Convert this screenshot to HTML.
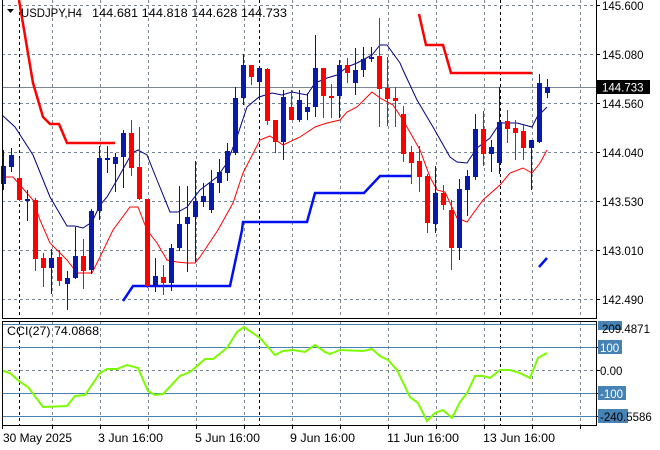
<!DOCTYPE html>
<html><head><meta charset="utf-8"><style>
html,body{margin:0;padding:0;background:#fff;}
svg{display:block;font-family:"Liberation Sans",sans-serif;}
</style></head><body>
<svg width="660" height="450" viewBox="0 0 660 450" xmlns="http://www.w3.org/2000/svg">
<rect width="660" height="450" fill="#fff"/>
<g stroke="#7a8796" stroke-width="1" stroke-dasharray="3,3" fill="none">
<path d="M2 54.5H596M2 103.5H596M2 152.5H596M2 201.5H596M2 250.5H596M2 299.5H596M2 5.5H596"/>
<path d="M52.5 0V318M100.5 0V318M148.5 0V318M196.5 0V318M244.5 0V318M292.5 0V318M340.5 0V318M388.5 0V318M436.5 0V318M484.5 0V318M532.5 0V318M580.5 0V318"/>
<path d="M52.5 322V425M100.5 322V425M148.5 322V425M196.5 322V425M244.5 322V425M292.5 322V425M340.5 322V425M388.5 322V425M436.5 322V425M484.5 322V425M532.5 322V425M580.5 322V425M2 370.5H596"/>
</g>
<g stroke="#000" stroke-width="1" stroke-dasharray="3,3" fill="none">
<path d="M19.5 0V318M259.5 0V318M500.5 0V318M19.5 322V425M259.5 322V425M500.5 322V425"/>
</g>
<path d="M2 87.5H596" stroke="#7d8590" stroke-width="1"/>
<g fill="none" stroke-width="2.5">
<polyline stroke="#f00" points="19,0 33,83 43,117 50,124 59,124 67,143 115,143"/>
<polyline stroke="#f00" points="419,14 426,45 443,45 451,73 532,73"/>
<polyline stroke="#0010f0" points="123,301 133,286 230,286 242,230 243,222 307,222 315,193 364,193 380,176 411,176"/>
<polyline stroke="#0010f0" points="539,267 547,258"/>
</g>
<polyline fill="none" stroke="#000080" stroke-width="1" points="2,115 15,127 33,155 50,197 67,226 75,226 83,228 92,222 100,205 107,197 117,180 132,153 138,150 147,155 157,180 170,212 178,212 187,207 200,190 217,177 227,163 237,137 247,107 259,97 272,93 282,95 292,92 307,95 315,83 327,78 337,75 347,67 357,63 372,55 380,45 387,45 400,63 403,70 417,100 433,127 450,157 457,162 467,163 477,148 490,138 500,123 517,123 532,127 537,117 547,107"/>
<polyline fill="none" stroke="#f00" stroke-width="1" points="2,177 13,177 33,200 40,220 50,243 67,260 77,273 92,273 100,257 113,230 130,207 138,207 147,230 157,243 167,260 177,262 187,263 195,263 200,257 218,230 233,203 243,173 260,140 270,136 283,145 300,137 315,127 327,123 340,120 347,112 357,107 372,92 380,98 393,105 403,120 420,150 430,177 437,190 445,192 457,218 467,222 483,200 500,185 510,173 523,168 532,173 540,163 547,150"/>
<g stroke-width="1">
<g stroke="#0000ff" fill="#0a1aa8">
<path d="M3.5 150V190M11.5 148V172M27.5 190V221M51.5 249V294M67.5 271V310M75.5 227V279M91.5 209V274M99.5 146V220M107.5 146V173M115.5 153V192M123.5 130V188M155.5 258V292M171.5 244V291M179.5 186V251M187.5 186V272M195.5 161V262M203.5 183V207M211.5 170V213M219.5 159V193M227.5 143V181M235.5 87V155M243.5 54V105M259.5 68V100M283.5 90V160M299.5 90V122M307.5 93V120M315.5 35V117M339.5 60V118M355.5 48V95M363.5 47V77M371.5 47V62M435.5 166V233M459.5 179V260M467.5 170V216M475.5 114V180M491.5 140V172M499.5 87V174M531.5 140V190M539.5 74V143M547.5 79V98"/>
</g>
<g fill="#0a1aa8">
<rect x="1" y="166" width="5" height="18"/><rect x="9" y="155" width="5" height="12"/><rect x="25" y="199" width="5" height="2"/><rect x="49" y="258" width="5" height="10"/><rect x="65" y="278" width="5" height="6"/><rect x="73" y="256" width="5" height="22"/><rect x="89" y="211" width="5" height="59"/><rect x="97" y="158" width="5" height="53"/><rect x="105" y="158" width="5" height="2"/><rect x="113" y="157" width="5" height="7"/><rect x="121" y="133" width="5" height="24"/><rect x="153" y="276" width="5" height="9"/><rect x="169" y="248" width="5" height="35"/><rect x="177" y="224" width="5" height="24"/><rect x="185" y="217" width="5" height="7"/><rect x="193" y="201" width="5" height="16"/><rect x="201" y="196" width="5" height="6"/><rect x="209" y="183" width="5" height="27"/><rect x="217" y="172" width="5" height="11"/><rect x="225" y="151" width="5" height="22"/><rect x="233" y="98" width="5" height="55"/><rect x="241" y="65" width="5" height="33"/><rect x="257" y="68" width="5" height="14"/><rect x="281" y="97" width="5" height="45"/><rect x="297" y="100" width="5" height="20"/><rect x="305" y="107" width="5" height="5"/><rect x="313" y="68" width="5" height="39"/><rect x="337" y="65" width="5" height="31"/><rect x="353" y="70" width="5" height="13"/><rect x="361" y="59" width="5" height="11"/><rect x="369" y="57" width="5" height="2"/><rect x="433" y="193" width="5" height="31"/><rect x="457" y="189" width="5" height="59"/><rect x="465" y="176" width="5" height="14"/><rect x="473" y="129" width="5" height="48"/><rect x="489" y="147" width="5" height="7"/><rect x="497" y="122" width="5" height="41"/><rect x="529" y="140" width="5" height="8"/><rect x="537" y="83" width="5" height="59"/><rect x="545" y="87" width="5" height="6"/>
</g>
<g stroke="#f00">
<path d="M19.5 158V201M35.5 198V271M43.5 253V287M59.5 250V286M83.5 239V289M131.5 120V176M139.5 127V200M147.5 199V288M163.5 265V295M251.5 65V85M267.5 68V125M275.5 120V153M291.5 90V120M323.5 68V118M331.5 84V118M347.5 58V83M379.5 18V127M387.5 57V126M395.5 87V127M403.5 106V162M411.5 146V184M419.5 146V192M427.5 174V233M443.5 185V210M451.5 200V270M483.5 111V166M507.5 110V143M515.5 120V160M523.5 125V160"/>
</g>
<g fill="#f00">
<rect x="17" y="178" width="5" height="22"/><rect x="33" y="200" width="5" height="59"/><rect x="41" y="258" width="5" height="10"/><rect x="57" y="257" width="5" height="24"/><rect x="81" y="256" width="5" height="15"/><rect x="129" y="133" width="5" height="35"/><rect x="137" y="167" width="5" height="32"/><rect x="145" y="199" width="5" height="87"/><rect x="161" y="277" width="5" height="6"/><rect x="249" y="65" width="5" height="12"/><rect x="265" y="69" width="5" height="52"/><rect x="273" y="120" width="5" height="22"/><rect x="289" y="107" width="5" height="13"/><rect x="321" y="68" width="5" height="28"/><rect x="329" y="96" width="5" height="2"/><rect x="345" y="65" width="5" height="8"/><rect x="377" y="56" width="5" height="33"/><rect x="385" y="88" width="5" height="11"/><rect x="393" y="98" width="5" height="3"/><rect x="401" y="114" width="5" height="40"/><rect x="409" y="152" width="5" height="11"/><rect x="417" y="161" width="5" height="16"/><rect x="425" y="176" width="5" height="47"/><rect x="441" y="193" width="5" height="12"/><rect x="449" y="210" width="5" height="38"/><rect x="481" y="129" width="5" height="25"/><rect x="505" y="121" width="5" height="8"/><rect x="513" y="128" width="5" height="5"/><rect x="521" y="131" width="5" height="17"/>
</g>
</g>
<g stroke="#4682b4" stroke-width="1">
<path d="M2 324.5H596M2 347.5H596M2 393.5H596M2 416.5H596"/>
</g>
<polyline fill="none" stroke="#7cfc00" stroke-width="2" points="3,371 10,373 20,382 28,387 43,407 67,406 75,396 85,395 100,373 107,369 117,369 127,365 138,368 148,391 155,395 163,394 180,376 190,372 205,359 213,359 227,348 237,332 244,327 260,338 275,355 283,351 293,350 305,352 315,345 325,352 330,354 340,350 363,351 372,349 380,356 388,360 397,370 410,397 418,403 427,421 435,413 443,410 452,418 460,402 467,393 475,376 483,376 490,378 500,370 510,370 520,373 530,378 538,358 547,353"/>
<g stroke="#000" stroke-width="1" fill="none">
<path d="M2.5 0V318.5H596.5V0"/>
<path d="M2.5 321.5H596.5V425.5H2.5Z"/>
</g>
<g stroke="#000"><path d="M596 5.5H600M596 54.5H600M596 103.5H600M596 152.5H600M596 201.5H600M596 250.5H600M596 299.5H600M596 347.5H600M596 370.5H600M596 393.5H600M596 416.5H600"/>
<path d="M52.5 425V429M148.5 425V429M100.5 425V429M196.5 425V429M244.5 425V429M292.5 425V429M340.5 425V429M388.5 425V429M436.5 425V429M484.5 425V429M532.5 425V429M580.5 425V429M2.5 425V429"/></g>
<g font-size="11.5" fill="#000">
<text x="602" y="10">145.600</text>
<text x="602" y="59">145.080</text>
<text x="602" y="108">144.560</text>
<text x="602" y="157">144.040</text>
<text x="602" y="206">143.530</text>
<text x="602" y="255">143.010</text>
<text x="602" y="304">142.490</text>
</g>
<rect x="597" y="80" width="53" height="14" fill="#000"/>
<text x="602" y="91.5" font-size="11.5" fill="#fff">144.733</text>
<rect x="598" y="321" width="24" height="9" fill="#4682b4"/>
<rect x="598" y="340" width="24" height="14" fill="#4682b4"/>
<rect x="598" y="386" width="28" height="14" fill="#4682b4"/>
<rect x="598" y="409" width="30" height="14" fill="#4682b4"/>
<g font-size="11.5">
<text x="602" y="333" fill="#000">209.4871</text>
<text x="600" y="352" fill="#fff">100</text>
<text x="600" y="375" fill="#000">0.00</text>
<text x="600" y="398" fill="#fff">-100</text>
<text x="600" y="421" fill="#000">-240.5586</text>
</g>
<path d="M7 9H14L10.5 13Z" fill="#000"/>
<text x="21" y="17" font-size="12" fill="#000" textLength="61" lengthAdjust="spacingAndGlyphs">USDJPY,H4</text>
<text x="92" y="17" font-size="12" fill="#000" textLength="195" lengthAdjust="spacingAndGlyphs">144.681 144.818 144.628 144.733</text>
<text x="7" y="335" font-size="12" fill="#000" textLength="92" lengthAdjust="spacingAndGlyphs">CCI(27) 74.0868</text>
<g font-size="12" fill="#000">
<text x="3" y="442" textLength="69" lengthAdjust="spacingAndGlyphs">30 May 2025</text>
<text x="98" y="442" textLength="65" lengthAdjust="spacingAndGlyphs">3 Jun 16:00</text>
<text x="195" y="442" textLength="65" lengthAdjust="spacingAndGlyphs">5 Jun 16:00</text>
<text x="290" y="442" textLength="65" lengthAdjust="spacingAndGlyphs">9 Jun 16:00</text>
<text x="387" y="442" textLength="72" lengthAdjust="spacingAndGlyphs">11 Jun 16:00</text>
<text x="483" y="442" textLength="72" lengthAdjust="spacingAndGlyphs">13 Jun 16:00</text>
</g>
</svg>
</body></html>
